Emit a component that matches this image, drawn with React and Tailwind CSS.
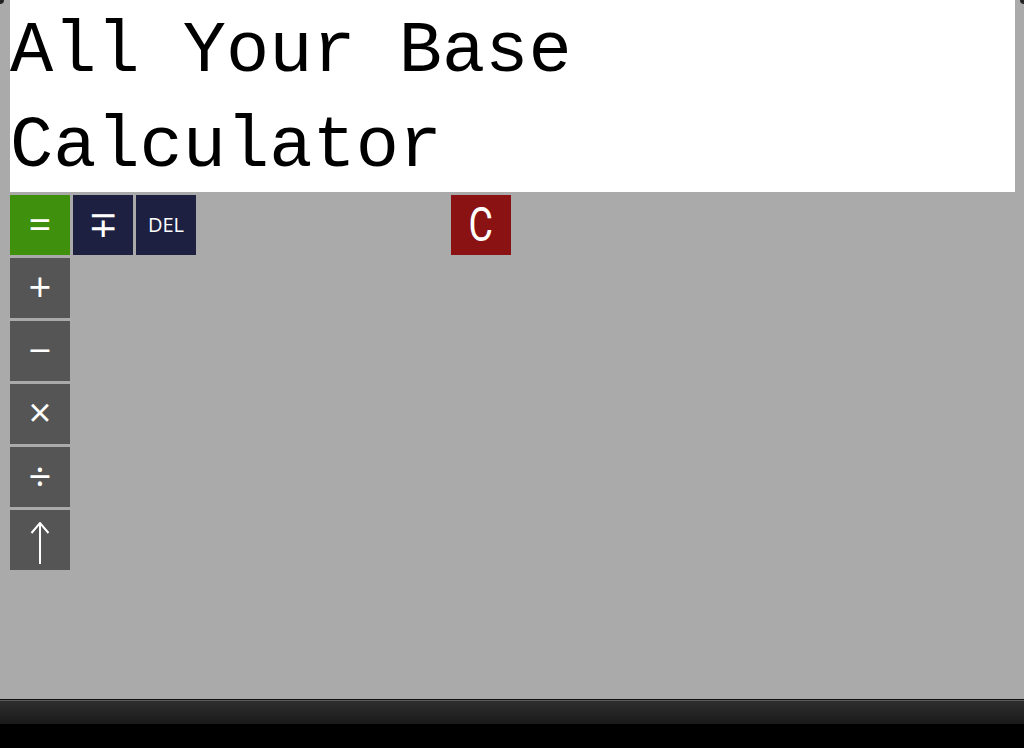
const Key = ({ bg, className = "", children }) => (
  <div className={`w-[60px] h-[60px] flex items-center justify-center text-white select-none ${bg} ${className}`}>
    {children}
  </div>
);

const Blank = () => <div className="w-[60px] h-[60px]" />;

export default function App() {
  return (
    <div className="w-[1024px] h-[748px] flex flex-col bg-[#aaaaaa] overflow-hidden relative">
      <div className="absolute top-0 left-0 w-[4px] h-[4px] bg-[#222] rounded-br-[4px]" />
      <div className="absolute top-0 right-0 w-[4px] h-[4px] bg-[#222] rounded-bl-[4px]" />

      <div className="flex-1 pl-[10px] pr-[9px]">
        <h1 className="bg-white h-[192px] pt-[5px] text-black font-['Liberation_Mono','Courier_New',monospace] text-[72px] leading-[95px] font-normal">
          All Your Base
          <br />
          Calculator
        </h1>

        <div className="mt-[3px] flex flex-col gap-[3px] font-['Open_Sans','DejaVu_Sans',sans-serif]">
          <div className="flex gap-[3px]">
            <Key bg="bg-[#3f910d]" className="text-[40px] font-medium leading-none pb-[3px]">=</Key>
            <Key bg="bg-[#1e2042]" className="text-[36px] font-medium leading-none pb-[3px]">∓</Key>
            <Key bg="bg-[#1e2042]" className="text-[20px] leading-none">DEL</Key>
            <Blank />
            <Blank />
            <Blank />
            <Blank />
            <Key bg="bg-[#8b1212]" className="leading-none">
              <span className="inline-block text-[48px] font-['Roboto',sans-serif] scale-x-[0.78]">C</span>
            </Key>
          </div>
          <Key bg="bg-[#555555]" className="text-[40px] font-medium leading-none pb-[3px]">+</Key>
          <Key bg="bg-[#555555]" className="text-[40px] font-medium leading-none pb-[3px]">−</Key>
          <Key bg="bg-[#555555]" className="text-[40px] font-medium leading-none pb-[4px]">×</Key>
          <Key bg="bg-[#555555]" className="text-[40px] font-medium leading-none pb-[3px]">÷</Key>
          <Key bg="bg-[#555555]" className="items-end pb-[6px]">
            <svg width="22" height="42" viewBox="0 0 22 42" fill="none" stroke="white" strokeWidth="2">
              <path d="M11 1 V42" />
              <path d="M2.5 11 L11 1 L19.5 11" />
            </svg>
          </Key>
        </div>
      </div>

      <div className="h-[1px] bg-[#111]" />
      <div className="h-[1px] bg-[#5a5a5a]" />
      <div className="h-[23px] bg-gradient-to-b from-[#2e2e2e] to-[#1a1a1a]" />
      <div className="h-[24px] bg-black" />
    </div>
  );
}
